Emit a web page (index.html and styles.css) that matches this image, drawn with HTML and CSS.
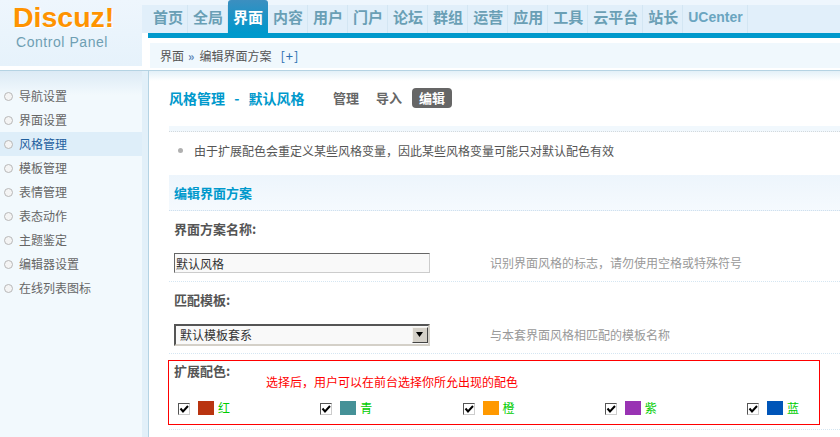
FILE: index.html
```html
<!DOCTYPE html>
<html lang="zh">
<head>
<meta charset="utf-8">
<title>Discuz! Control Panel</title>
<link rel="stylesheet" href="styles.css">
</head>
<body>
<header class="top">
  <div class="logo">
    <div class="logo-mark">Discuz!</div>
    <div class="logo-sub">Control Panel</div>
  </div>
  <div class="top-right">
    <nav class="nav">
      <a class="nav-item">首页</a><a class="nav-item">全局</a><a class="nav-item active">界面</a><a class="nav-item">内容</a><a class="nav-item">用户</a><a class="nav-item">门户</a><a class="nav-item">论坛</a><a class="nav-item">群组</a><a class="nav-item">运营</a><a class="nav-item">应用</a><a class="nav-item">工具</a><a class="nav-item">云平台</a><a class="nav-item">站长</a><a class="nav-item uc">UCenter</a>
    </nav>
    <div class="nav-rule"></div>
    <div class="crumb">界面<span class="crumb-sep">»</span>编辑界面方案<a class="crumb-plus">[+]</a></div>
  </div>
</header>
<div class="body-wrap">
  <aside class="side">
    <ul class="menu">
      <li>导航设置</li>
      <li>界面设置</li>
      <li class="on">风格管理</li>
      <li>模板管理</li>
      <li>表情管理</li>
      <li>表态动作</li>
      <li>主题鉴定</li>
      <li>编辑器设置</li>
      <li>在线列表图标</li>
    </ul>
  </aside>
  <main class="main">
    <div class="title-row">
      <h1 class="title">风格管理 - 默认风格</h1>
      <div class="tabs"><a class="tab">管理</a><a class="tab">导入</a><a class="tab current">编辑</a></div>
    </div>
    <div class="tip-band"></div>
    <div class="tip"><span class="tip-dot"></span>由于扩展配色会重定义某些风格变量，因此某些风格变量可能只对默认配色有效</div>
    <h2 class="section">编辑界面方案</h2>
    <div class="label first">界面方案名称:</div>
    <div class="field">
      <input class="text" type="text" value="默认风格">
      <span class="hint">识别界面风格的标志，请勿使用空格或特殊符号</span>
    </div>
    <div class="label second">匹配模板:</div>
    <div class="field select-field">
      <div class="select-wrap">
        <select class="select"><option>默认模板套系</option></select>
        <span class="select-btn"><svg width="10" height="6" viewBox="0 0 10 6"><path d="M1 0h7L4.5 5z" fill="#000"/></svg></span>
      </div>
      <span class="hint">与本套界面风格相匹配的模板名称</span>
    </div>
    <div class="red-box">
      <div class="red-head">
        <span class="label-inline">扩展配色:</span>
        <span class="red-note">选择后，用户可以在前台选择你所允出现的配色</span>
      </div>
      <div class="colors">
        <label class="color"><span class="check"><svg width="10" height="10" viewBox="0 0 10 10"><path d="M1.5 4.5 4 7.5 9 2" fill="none" stroke="#000" stroke-width="2"/></svg></span><span class="swatch red"></span><span class="cname">红</span></label>
        <label class="color"><span class="check"><svg width="10" height="10" viewBox="0 0 10 10"><path d="M1.5 4.5 4 7.5 9 2" fill="none" stroke="#000" stroke-width="2"/></svg></span><span class="swatch teal"></span><span class="cname">青</span></label>
        <label class="color"><span class="check"><svg width="10" height="10" viewBox="0 0 10 10"><path d="M1.5 4.5 4 7.5 9 2" fill="none" stroke="#000" stroke-width="2"/></svg></span><span class="swatch orange"></span><span class="cname">橙</span></label>
        <label class="color"><span class="check"><svg width="10" height="10" viewBox="0 0 10 10"><path d="M1.5 4.5 4 7.5 9 2" fill="none" stroke="#000" stroke-width="2"/></svg></span><span class="swatch purple"></span><span class="cname">紫</span></label>
        <label class="color"><span class="check"><svg width="10" height="10" viewBox="0 0 10 10"><path d="M1.5 4.5 4 7.5 9 2" fill="none" stroke="#000" stroke-width="2"/></svg></span><span class="swatch blue"></span><span class="cname">蓝</span></label>
      </div>
    </div>
    <div class="end-rule"></div>
  </main>
</div>
</body>
</html>
```
FILE: styles.css
```css
* { box-sizing: border-box; }
html, body { margin: 0; padding: 0; height: 437px; overflow: hidden; background: #fff; }
body { font: 12px/1.5 "Noto Sans CJK SC", "Liberation Sans", sans-serif; color: #666; }
h1, h2, ul { margin: 0; padding: 0; }

.top { display: flex; height: 71px; border-bottom: 1px solid #b5d3e3; background: linear-gradient(#eef6fd 0 5px, #e1effa 5px) no-repeat; background-size: 100% 33px; }
.logo { width: 148px; height: 66px; flex: none; padding: 1px 0 0 13px; border-right: 6px solid transparent; background: linear-gradient(#eef6fd, #e6f2fb) padding-box; }
.logo-mark { font: bold 28.5px/33px "Liberation Sans", sans-serif; color: #ff9300; text-shadow: 1px 1px 0 #fff; height: 33px; }
.logo-sub { font: 14px/16px "Liberation Sans", sans-serif; color: #6f9fb3; margin-left: 3px; letter-spacing: 0.55px; }

.top-right { flex: 1; min-width: 0; }
.nav { display: flex; height: 33px; padding-top: 5px; }
.nav-item { height: 28px; padding: 0 4px 0 5px; font: bold 15px/24px "Noto Sans CJK SC", sans-serif; color: #6a9fb5; border-right: 1px solid #d3e6f3; white-space: nowrap; }
.nav-item.active { height: 33px; margin-top: -5px; padding: 5px 5px 0; color: #fff; border-right: 0; background: linear-gradient(#3c8fc0, #0e95c9 75%, #0099cc); border-radius: 3px 3px 0 0; }
.nav-item.uc { font: bold 14px/24px "Liberation Sans", sans-serif; color: #6aa5c0; }
.nav-rule { height: 5px; background: #0099cc; }
.crumb { height: 25px; margin: 5px 0 0 2px; padding-left: 10px; background: #f0f8fd; line-height: 25px; color: #555; font-size: 12px; }
.crumb-sep { color: #5b85b5; font-weight: bold; margin: 0 5px 0 4px; }
.crumb-plus { color: #2a6fb0; margin-left: 9px; font-size: 13px; letter-spacing: 1px; }

.body-wrap { display: flex; height: 366px; }
.side { width: 149px; flex: none; border-right: 1px solid #b5d3e3; padding-right: 6px; background: #e2f0f9; }
.menu { list-style: none; height: 100%; padding-top: 13px; background: linear-gradient(#dceaf5, #f2f9fd 24px); }
.menu li { height: 24px; line-height: 24px; padding-left: 19px; color: #666; font-size: 12px; position: relative; }
.menu li::before { content: ""; position: absolute; left: 4px; top: 8px; width: 7px; height: 7px; border: 1px solid #b8b8b8; border-radius: 50%; background: #f4f4f4; }
.menu li.on { background: #deeef9; color: #1f5f9e; }

.main { flex: 1; min-width: 0; padding-left: 20px; background: linear-gradient(#e3f0f8, #fff 10px) no-repeat; }
.title-row { display: flex; align-items: center; height: 55px; padding: 17px 0 18px; }
.title { font: bold 14px/20px "Noto Sans CJK SC", sans-serif; color: #0099cc; width: 164px; white-space: nowrap; word-spacing: 6px; }
.tabs { display: flex; align-items: center; }
.tab { font-weight: bold; font-size: 13px; color: #666; line-height: 20px; margin-right: 17px; white-space: nowrap; }
.tab.current { background: #666; color: #fff; border-radius: 4px; padding: 0 7px; margin: 0 0 0 -7px; width: 40px; }
.tip-band { height: 6px; background: #f1f8fd; border-bottom: 1px dotted #d3d9dd; }
.tip { height: 43px; padding: 7px 0 0 25px; line-height: 24px; color: #555; position: relative; }
.tip-dot { position: absolute; left: 9px; top: 16px; width: 5px; height: 5px; border-radius: 50%; background: #b0b0b0; }
.section { height: 36px; padding-left: 5px; font: bold 13px/35px "Noto Sans CJK SC", sans-serif; color: #0099cc; background: linear-gradient(#edf5fc, #f5fafe); border-bottom: 1px dotted #d0e0ee; }
.label { font: bold 13px/20px "Noto Sans CJK SC", sans-serif; color: #555; padding-left: 5px; }
.label.first { margin-top: 8px; }
.label.second { margin-top: 8px; }
.field { display: flex; align-items: center; height: 40px; margin-top: 3px; padding: 11px 0 8px 5px; border-bottom: 1px dotted #d5e6f2; }
.text { width: 256px; height: 20px; flex: none; padding: 0 0 0 1px; font: 12px/18px "Noto Sans CJK SC", sans-serif; color: #333; background: #f9f9f9; border: 1px solid; border-color: #666 #ccc #ccc #666; outline: 0; }
.hint { margin-left: 60px; color: #999; font-size: 12px; white-space: nowrap; }
.select-field { height: 41px; padding: 11px 0 7px 5px; }
.select-wrap { position: relative; width: 256px; height: 22px; flex: none; }
.select { appearance: none; -webkit-appearance: none; display: block; width: 100%; height: 100%; padding: 0 0 0 4px; font: 12px/18px "Noto Sans CJK SC", sans-serif; color: #333; background: #f9f9f9; border: 2px solid; border-color: #555 #d4d0c8 #d4d0c8 #555; border-radius: 0; outline: 0; }
.select-btn { position: absolute; right: 2px; top: 3px; width: 16px; height: 16px; display: flex; align-items: center; justify-content: center; background: #d4d0c8; border: 1px solid; border-color: #f5f3ee #444 #444 #f5f3ee; }
.red-box { width: 652px; height: 65px; margin: 6px 0 0 -1px; border: 1px solid #f00; }
.red-head { display: flex; height: 38px; padding-left: 5px; }
.label-inline { font: bold 13px/20px "Noto Sans CJK SC", sans-serif; color: #555; width: 92px; flex: none; }
.red-note { color: #f00; font-size: 12px; line-height: 18px; margin-top: 12px; }
.colors { display: grid; grid-template-columns: repeat(4, 142.25px) auto; padding-left: 9px; }
.color { display: flex; align-items: center; height: 18px; }
.check { width: 12px; height: 12px; margin-top: 2px; flex: none; display: flex; align-items: center; justify-content: center; background: #fff; border: 1px solid; border-color: #555 #ccc #ccc #555; }
.swatch { width: 16px; height: 14px; margin-left: 8px; flex: none; }
.cname { margin-left: 4px; color: #00cc00; font-size: 12px; line-height: 18px; }
.red { background: #b93410; }
.teal { background: #459197; }
.orange { background: #ff9900; }
.purple { background: #9933b3; }
.blue { background: #0055b8; }
.end-rule { height: 0; margin-top: 4px; border-bottom: 1px dotted #d5e6f2; }
```
